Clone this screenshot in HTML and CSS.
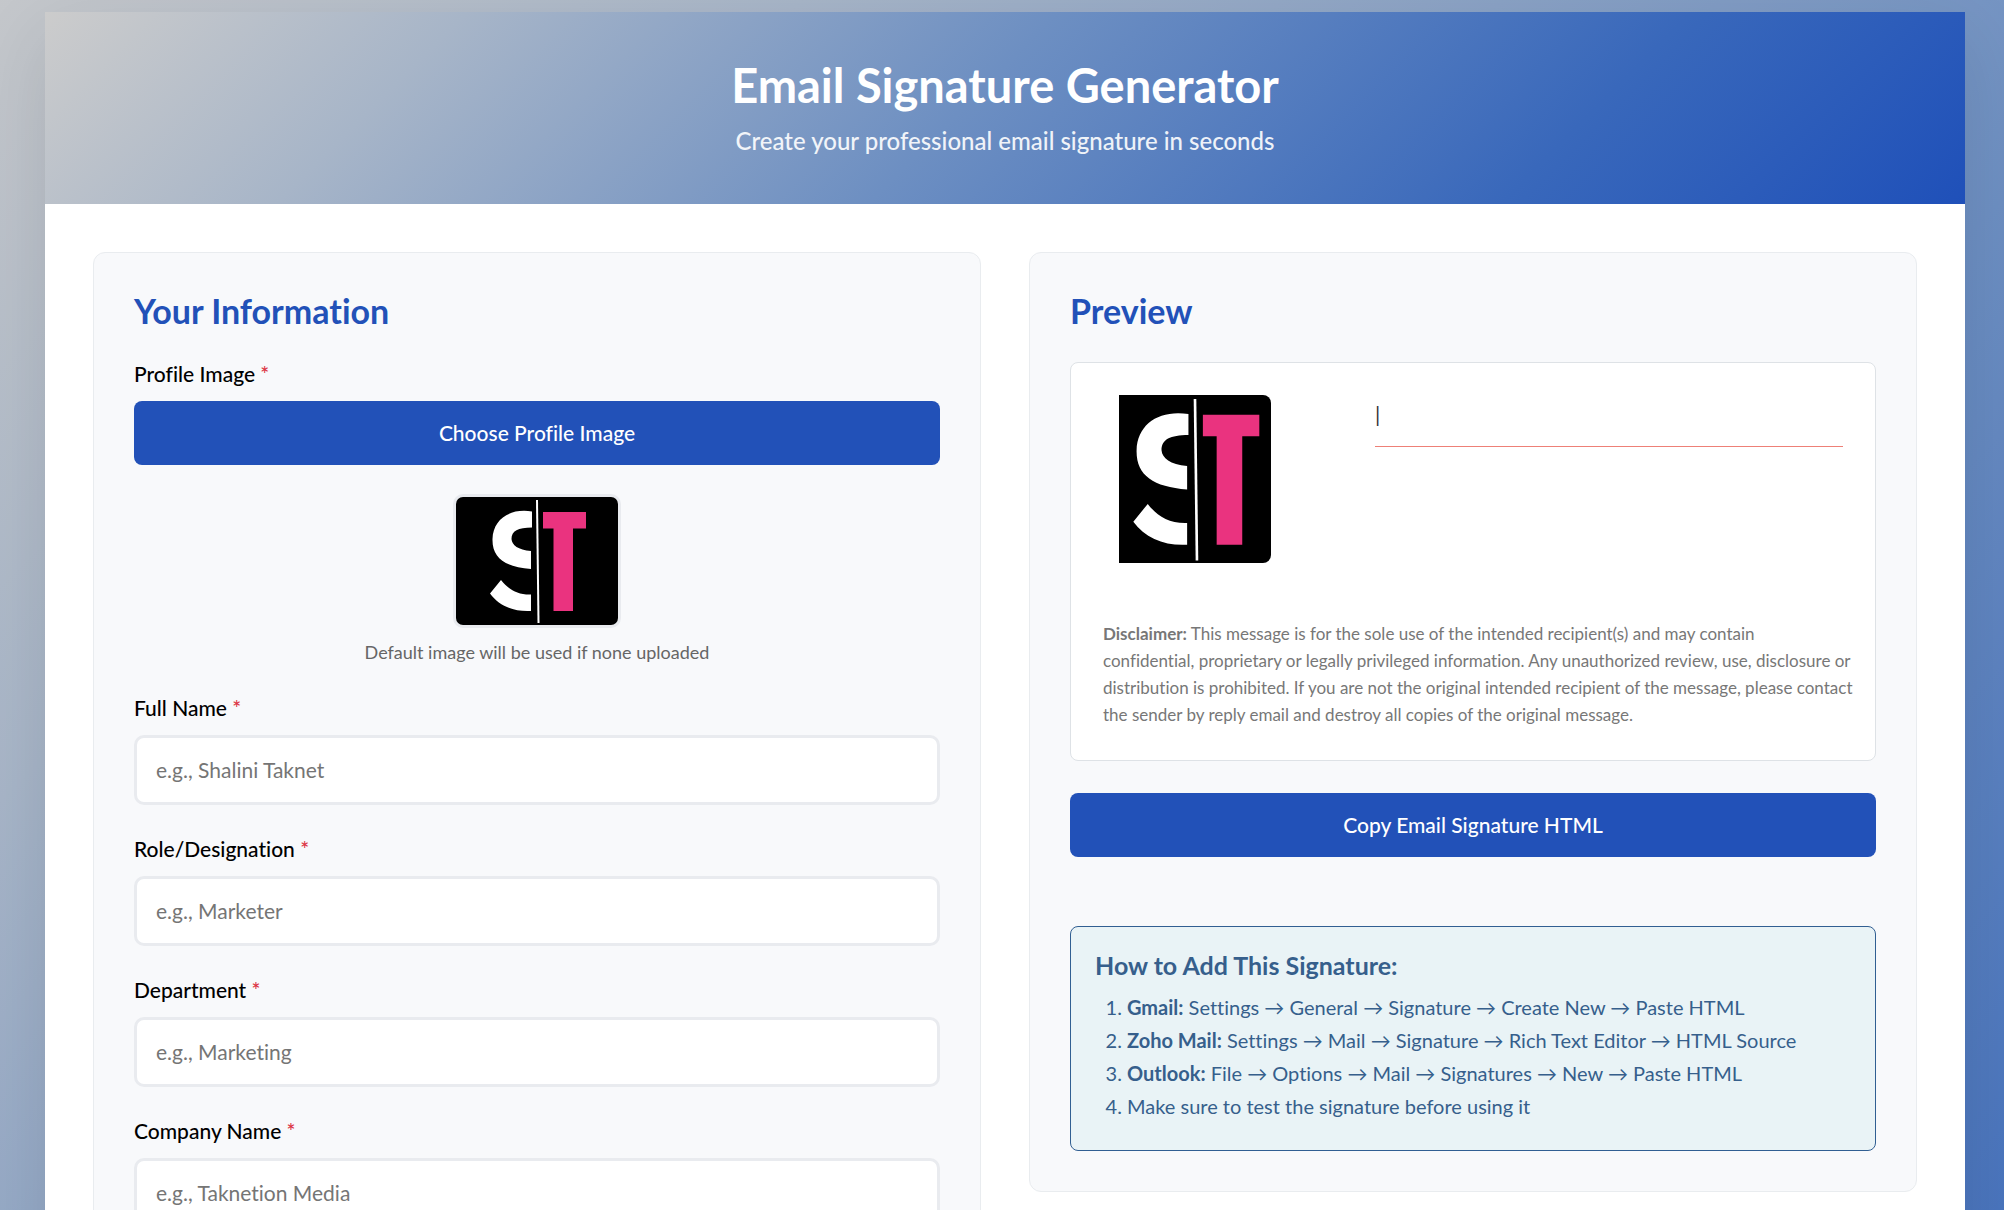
FILE: index.html
```html
<!DOCTYPE html>
<html lang="en">
<head>
<meta charset="utf-8">
<meta name="viewport" content="width=device-width, initial-scale=1">
<title>Email Signature Generator</title>
<link rel="stylesheet" href="styles.css">
</head>
<body>
<svg class="sprite" aria-hidden="true">
  <symbol id="logo" viewBox="0 0 162 128" preserveAspectRatio="xMidYMid slice">
    <rect width="162" height="128" fill="#000"/>
    <path fill="#fff" d="M76 14.500C54 11 37 22 36.500 42C36 61 49 70 75 72V54C62 53 56 48 55.500 42C55.500 34 62 30.500 76 30.500ZM45 83L34 96.500C43 109 58 115 75 114V97.500C61 98 52 92 45 83Z"/>
    <path fill="#fff" d="M80 3H82L83.500 126H81.500Z"/>
    <path fill="#ea337f" d="M87 15H130V31.500H117V114H97.500V31.500H87Z"/>
  </symbol>
</svg>
<main class="container">
  <header class="header">
    <h1 class="title">Email Signature Generator</h1>
    <p class="subtitle">Create your professional email signature in seconds</p>
  </header>
  <div class="content">
    <form class="panel">
      <h2 class="panel-title">Your Information</h2>
      <div class="field">
        <label class="label" for="image">Profile Image <span class="required">*</span></label>
        <button class="button" id="image" type="button">Choose Profile Image</button>
        <div class="upload">
          <svg class="upload-image" role="img" aria-label="ST"><use href="#logo"/></svg>
          <p class="hint">Default image will be used if none uploaded</p>
        </div>
      </div>
      <div class="field">
        <label class="label" for="name">Full Name <span class="required">*</span></label>
        <input class="input" id="name" type="text" placeholder="e.g., Shalini Taknet">
      </div>
      <div class="field">
        <label class="label" for="role">Role/Designation <span class="required">*</span></label>
        <input class="input" id="role" type="text" placeholder="e.g., Marketer">
      </div>
      <div class="field">
        <label class="label" for="department">Department <span class="required">*</span></label>
        <input class="input" id="department" type="text" placeholder="e.g., Marketing">
      </div>
      <div class="field">
        <label class="label" for="company">Company Name <span class="required">*</span></label>
        <input class="input" id="company" type="text" placeholder="e.g., Taknetion Media">
      </div>
    </form>
    <section class="panel">
      <h2 class="panel-title">Preview</h2>
      <div class="preview">
        <div class="signature">
          <svg class="signature-image" role="img" aria-label="ST"><use href="#logo"/></svg>
          <div class="signature-details">|</div>
        </div>
        <p class="disclaimer"><strong>Disclaimer:</strong> This message is for the sole use of the intended recipient(s) and may contain<br> confidential, proprietary or legally privileged information. Any unauthorized review, use, disclosure&nbsp;or<br> distribution is prohibited. If you are not the original intended recipient of the message, please&nbsp;contact<br> the sender by reply email and destroy all copies of the original message.</p>
      </div>
      <button class="button" type="button">Copy Email Signature HTML</button>
      <div class="guide">
        <h3 class="guide-title">How to Add This Signature:</h3>
        <ol class="steps">
          <li><strong>Gmail:</strong> Settings → General → Signature → Create New → Paste HTML</li>
          <li><strong>Zoho Mail:</strong> Settings → Mail → Signature → Rich Text Editor → HTML Source</li>
          <li><strong>Outlook:</strong> File → Options → Mail → Signatures → New → Paste HTML</li>
          <li>Make sure to test the signature before using it</li>
        </ol>
      </div>
    </section>
  </div>
</main>
</body>
</html>
```

FILE: styles.css
```css
* {
  box-sizing: border-box;
  margin: 0;
}

body {
  padding: 12px 39px 40px 45px;
  background: #1f50b9 linear-gradient(135deg, #cccccc 0%, #a7b5c8 20%, #6d8fc2 48%, #3968bb 78%, #1f50b9 100%) 0 -200px / 100% 3000px no-repeat;
  font-family: Lato, "Open Sans", sans-serif;
  font-size: 21px;
  font-variant-ligatures: none;
  line-height: 24px;
  color: #000;
}

.sprite {
  position: absolute;
  width: 0;
  height: 0;
}

.container {
  max-width: 1920px;
  margin: 0 auto;
  background: #fff;
  box-shadow: 0 24px 72px rgba(0, 0, 0, 0.1);
}

.header {
  padding: 48px 48px 46px;
  background: linear-gradient(135deg, #cccccc 0%, #a7b5c8 20%, #6d8fc2 48%, #3968bb 78%, #1f50b9 100%);
  color: #fff;
  text-align: center;
}

.title {
  margin-bottom: 14px;
  font-size: 47px;
  line-height: 50px;
}

.subtitle {
  font-size: 24px;
  font-weight: 500;
  line-height: 34px;
  opacity: 0.9;
}

.content {
  display: grid;
  grid-template-columns: repeat(2, minmax(0, 1fr));
  align-items: start;
  gap: 48px;
  padding: 48px;
}

.panel {
  padding: 40px;
  border: 1px solid #e9ecef;
  border-radius: 12px;
  background: #f8f9fb;
}

.panel-title {
  margin-bottom: 33px;
  color: #2251b8;
  font-size: 34px;
  line-height: 36px;
}

.field {
  margin-bottom: 32px;
}

.label {
  display: block;
  margin-bottom: 15px;
  font-weight: 500;
}

.required {
  color: #dc3545;
}

.button {
  display: block;
  width: 100%;
  height: 64px;
  border: 0;
  border-radius: 8px;
  background: #2251b8;
  color: #fff;
  font: inherit;
  font-variant-ligatures: none;
  font-weight: 500;
}

.upload {
  display: flex;
  flex-direction: column;
  align-items: center;
  gap: 12px;
  margin-top: 29px;
}

.upload-image {
  width: 168px;
  height: 134px;
  border: 3px solid #e9ebef;
  border-radius: 10px;
}

.hint {
  color: #666;
  font-size: 18px;
}

.input {
  display: block;
  width: 100%;
  height: 70px;
  padding: 0 19px 2px;
  border: 3px solid #e9ebef;
  border-radius: 10px;
  background: #fff;
  font: inherit;
  font-variant-ligatures: none;
}

.input::placeholder {
  color: #757575;
}

.preview {
  margin-bottom: 32px;
  padding: 32px;
  border: 1px solid #dee2e6;
  border-radius: 8px;
  background: #fff;
}

.signature {
  display: grid;
  grid-template-columns: 152px 1fr;
  align-items: start;
  gap: 104px;
  padding-left: 16px;
}

.signature-image {
  width: 152px;
  height: 168px;
  border-radius: 0 8px 8px 0;
}

.signature-details {
  height: 52px;
  border-bottom: 1px solid #ee8077;
  color: #333;
  line-height: 38px;
}

.disclaimer {
  margin-top: 57px;
  color: #777;
  font-size: 17px;
  line-height: 27px;
  white-space: nowrap;
}

.guide {
  margin-top: 69px;
  padding: 24px 24px 27px;
  border: 1px solid #315f92;
  border-radius: 8px;
  background: #e9f3f6;
  color: #365f8c;
}

.guide-title {
  margin-bottom: 12px;
  font-size: 25px;
  line-height: 28px;
}

.steps {
  padding-left: 32px;
  font-size: 20px;
  line-height: 33px;
}
```
